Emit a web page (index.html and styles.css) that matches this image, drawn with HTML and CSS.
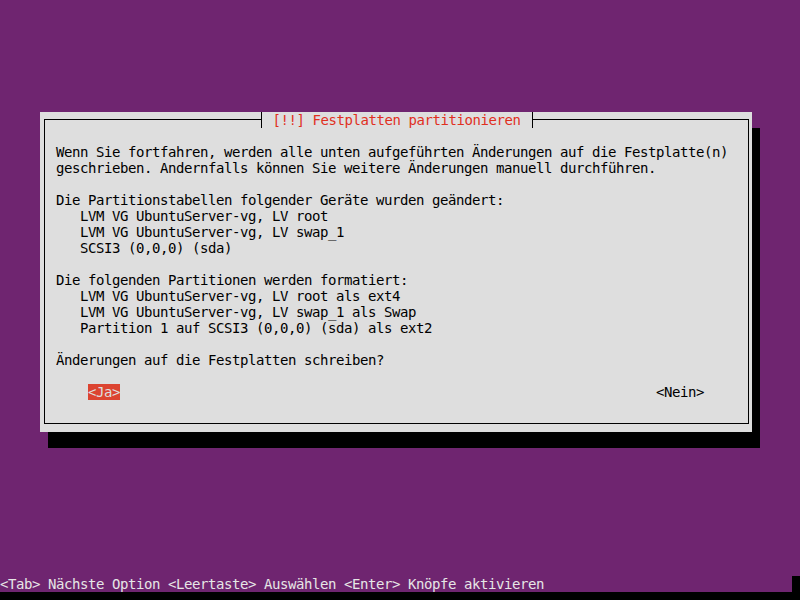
FILE: index.html
```
<!DOCTYPE html>
<html lang="de">

<head>
  <meta charset="UTF-8" />
  <title>Festplatten partitionieren</title>
  <link rel="stylesheet" href="styles.css">
</head>

<body>
  <div class="screen">
    <!-- Dialog -->
    <div class="dialog">
      <div class="frame">
        <div class="title">[!!] Festplatten partitionieren</div>
        <pre class="message">Wenn Sie fortfahren, werden alle unten aufgeführten Änderungen auf die Festplatte(n)
geschrieben. Andernfalls können Sie weitere Änderungen manuell durchführen.

Die Partitionstabellen folgender Geräte wurden geändert:
   LVM VG UbuntuServer-vg, LV root
   LVM VG UbuntuServer-vg, LV swap_1
   SCSI3 (0,0,0) (sda)

Die folgenden Partitionen werden formatiert:
   LVM VG UbuntuServer-vg, LV root als ext4
   LVM VG UbuntuServer-vg, LV swap_1 als Swap
   Partition 1 auf SCSI3 (0,0,0) (sda) als ext2

Änderungen auf die Festplatten schreiben?</pre>
        <div class="buttons">
          <span class="btn btn-active">&lt;Ja&gt;</span>
          <span class="btn">&lt;Nein&gt;</span>
        </div>
      </div>
    </div>

    <!-- Status line -->
    <div class="status">
      <span class="status-text">&lt;Tab&gt; Nächste Option &lt;Leertaste&gt; Auswählen &lt;Enter&gt; Knöpfe aktivieren</span>
      <span class="cursor"></span>
    </div>
  </div>
</body>

</html>
```

FILE: styles.css
```
body {
  margin: 0;
  padding: 0;
  width: 800px;
  height: 600px;
  background: #000;
  font-family: "DejaVu Sans Mono", "Liberation Mono", monospace;
  font-size: 14px;
  letter-spacing: -0.43px;
  line-height: 16px;
  overflow: hidden;
}

.screen {
  height: 592px;
  background: #6f2570;
  display: flex;
  flex-direction: column;
}

.dialog {
  width: 712px;
  height: 320px;
  margin: 112px 0 0 40px;
  background: #dedede;
  color: #000;
  box-shadow: 8px 16px 0 #000;
  box-sizing: border-box;
  padding-top: 7px;
  padding-left: 4px;
}

.frame {
  position: relative;
  width: 705px;
  height: 305px;
  border: 1px solid #000;
  box-sizing: border-box;
  padding: 24px 0 0 11px;
}

.title {
  position: absolute;
  top: -8px;
  left: 0;
  right: 0;
  margin: 0 auto;
  width: 248px;
  height: 16px;
  padding: 0 11px;
  background: #dedede;
  border-left: 1px solid #000;
  border-right: 1px solid #000;
  color: #e0301e;
  white-space: pre;
}

.message {
  margin: 0;
  font: inherit;
  white-space: pre;
}

.buttons {
  display: flex;
  justify-content: space-between;
  margin-top: 16px;
  padding: 0 44px 0 32px;
}

.btn {
  white-space: pre;
}

.btn-active {
  background: #dc4431;
  color: #dedede;
}

.status {
  margin-top: auto;
  display: flex;
  height: 16px;
}

.status-text {
  flex: 1;
  color: #e6e6e6;
  white-space: pre;
}

.cursor {
  width: 8px;
  background: #000;
}
```
